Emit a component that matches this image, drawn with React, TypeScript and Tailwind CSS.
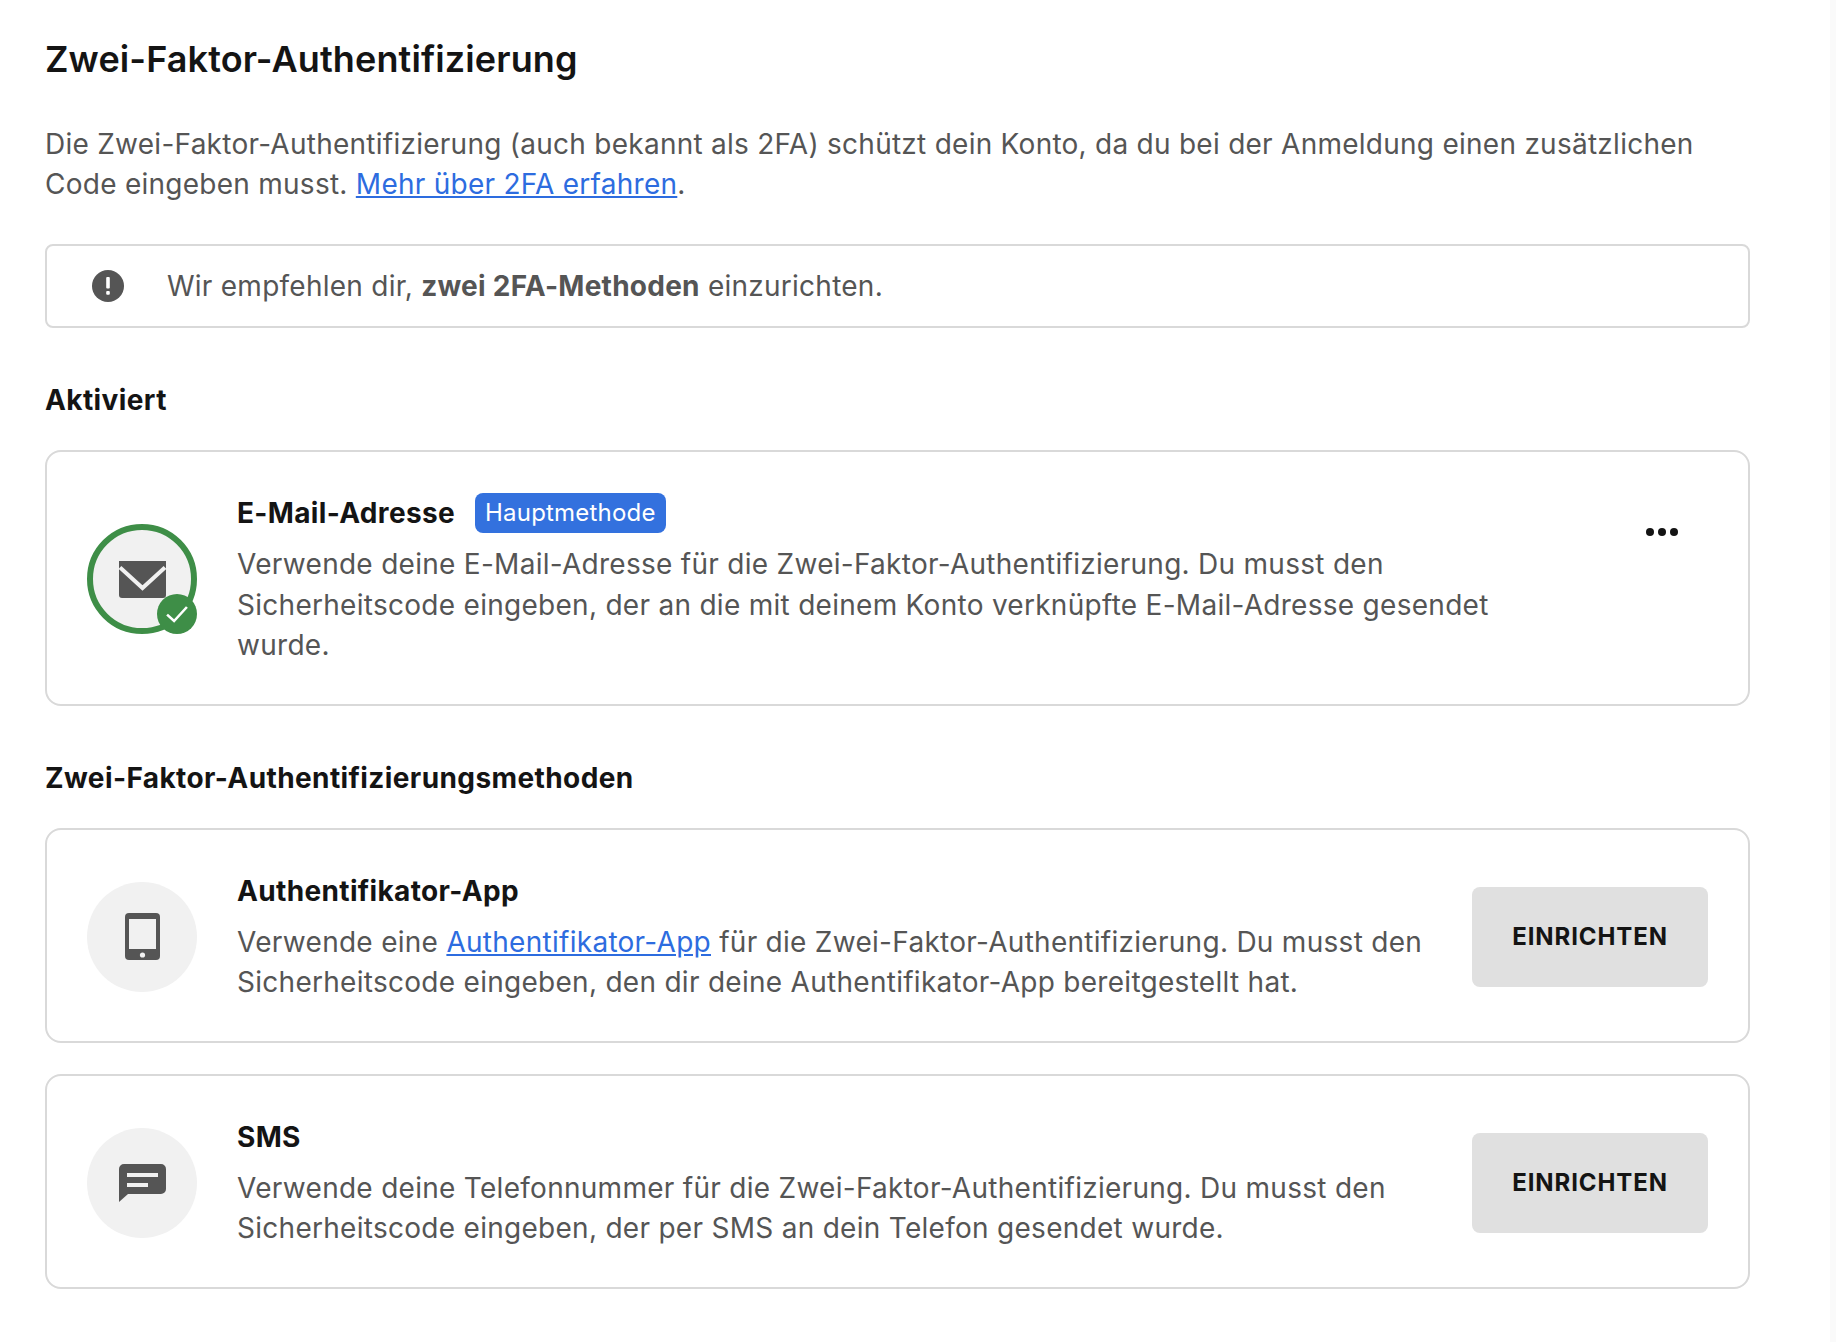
function InfoIcon() {
  return (
    <svg viewBox="0 0 32 32" className="w-8 h-8 shrink-0">
      <circle cx="16" cy="16" r="16" fill="#555555" />
      <rect x="14.2" y="7" width="3.6" height="11.5" rx="1" fill="#ffffff" />
      <rect x="14.2" y="21" width="3.6" height="3.8" rx="1" fill="#ffffff" />
    </svg>
  )
}

function MailIcon() {
  return (
    <svg viewBox="0 0 47 37" className="w-[47px] h-[37px]">
      <path d="M0 0H47V34a3 3 0 0 1-3 3H3a3 3 0 0 1-3-3Z" fill="#555555" />
      <path d="M1 6.5 23.5 27 46 6.5" fill="none" stroke="#f1f1f1" strokeWidth="4" />
    </svg>
  )
}

function TabletIcon() {
  return (
    <svg viewBox="0 0 35 47" className="w-[35px] h-[47px]">
      <rect width="35" height="47" rx="4" fill="#555555" />
      <rect x="4" y="6" width="27" height="30" fill="#f1f1f1" />
      <circle cx="17.5" cy="42" r="2.6" fill="#f1f1f1" />
    </svg>
  )
}

function MessageIcon() {
  return (
    <svg viewBox="0 0 47 38" className="w-[47px] h-[38px]">
      <path d="M5 0H42a5 5 0 0 1 5 5V25a5 5 0 0 1-5 5H9L0 38V5a5 5 0 0 1 5-5Z" fill="#555555" />
      <rect x="8" y="9" width="31" height="4" fill="#f1f1f1" />
      <rect x="8" y="19" width="21" height="4" fill="#f1f1f1" />
    </svg>
  )
}

function Dots() {
  return (
    <div className="flex gap-[4px] shrink-0 self-start mt-[35px] w-[32px] mr-[30px] ml-[106px]">
      <span className="w-2 h-2 rounded-full bg-[#141414]" />
      <span className="w-2 h-2 rounded-full bg-[#141414]" />
      <span className="w-2 h-2 rounded-full bg-[#141414]" />
    </div>
  )
}

function SetupButton() {
  return (
    <button className="w-[236px] h-[100px] shrink-0 ml-[40px] rounded-lg bg-[#e0e0e0] text-[24px] font-bold tracking-[0.9px] text-[#141414]">
      EINRICHTEN
    </button>
  )
}

function MethodCard({ icon, title, badge, action, children }: {
  icon: React.ReactNode
  title: string
  badge?: string
  action: React.ReactNode
  children: React.ReactNode
}) {
  return (
    <div className="flex items-center border-2 border-[#d9d9d9] rounded-2xl px-10 pt-[41px] pb-[38px]">
      {icon}
      <div className="flex-1 min-w-0 ml-10">
        <div className="flex items-start h-[51px]">
          <h3 className="text-[28px] leading-10 font-bold tracking-[0.35px] text-[#141414]">{title}</h3>
          {badge && (
            <span className="ml-5 h-10 px-[10px] rounded-lg bg-[#3371de] text-white text-[24px] leading-10 tracking-[0.2px]">
              {badge}
            </span>
          )}
        </div>
        <p className="text-[28px] leading-[40.5px] tracking-[0.28px] text-[#555555]">{children}</p>
      </div>
      {action}
    </div>
  )
}

function IconCircle({ children, done }: { children: React.ReactNode; done?: boolean }) {
  return (
    <div className={`relative w-[110px] h-[110px] shrink-0 rounded-full bg-[#f1f1f1] flex items-center justify-center ${done ? 'border-[6px] border-[#3e8e47]' : ''}`}>
      {children}
      {done && (
        <div className="absolute right-[-6px] bottom-[-6px] w-10 h-10 rounded-full bg-[#3e8e47] flex items-center justify-center">
          <svg viewBox="0 0 24 24" className="w-7 h-7">
            <path d="M3.5 12.5 9.5 18 20.5 6" fill="none" stroke="#ffffff" strokeWidth="2.2" />
          </svg>
        </div>
      )}
    </div>
  )
}

export default function App() {
  return (
    <div className="flex h-[1342px] bg-white font-['Inter',sans-serif]">
      <main className="flex-1 pl-[45px] pr-[80px] pt-[39px]">
        <h1 className="text-[36px] leading-10 font-semibold tracking-[0.12px] text-[#141414]">Zwei-Faktor-Authentifizierung</h1>
        <p className="mt-[45px] text-[28px] leading-10 tracking-[0.26px] text-[#555555]">
          Die Zwei-Faktor-Authentifizierung (auch bekannt als 2FA) schützt dein Konto, da du bei der Anmeldung einen zusätzlichen Code eingeben musst.{' '}
          <a className="text-[#2d6cdf] underline">Mehr über 2FA erfahren</a>.
        </p>

        <div className="mt-10 h-[84px] flex items-center border-2 border-[#d9d9d9] rounded-lg pl-[45px]">
          <InfoIcon />
          <p className="ml-[43px] text-[28px] leading-10 tracking-[0.25px] text-[#555555]">
            Wir empfehlen dir, <b className="font-bold">zwei 2FA-Methoden</b> einzurichten.
          </p>
        </div>

        <h2 className="mt-[52px] text-[28px] leading-10 font-bold tracking-[0.4px] text-[#141414]">Aktiviert</h2>
        <div className="mt-[30px]">
          <MethodCard
            icon={<IconCircle done><MailIcon /></IconCircle>}
            title="E-Mail-Adresse"
            badge="Hauptmethode"
            action={<Dots />}
          >
            Verwende deine E-Mail-Adresse für die Zwei-Faktor-Authentifizierung. Du musst den Sicherheitscode eingeben, der an die mit deinem Konto verknüpfte E-Mail-Adresse gesendet wurde.
          </MethodCard>
        </div>

        <h2 className="mt-[52px] text-[28px] leading-10 font-bold tracking-[0.4px] text-[#141414]">Zwei-Faktor-Authentifizierungsmethoden</h2>
        <div className="mt-[30px] flex flex-col gap-[31px]">
          <MethodCard
            icon={<IconCircle><TabletIcon /></IconCircle>}
            title="Authentifikator-App"
            action={<SetupButton />}
          >
            Verwende eine <a className="text-[#2d6cdf] underline">Authentifikator-App</a> für die Zwei-Faktor-Authentifizierung. Du musst den Sicherheitscode eingeben, den dir deine Authentifikator-App bereitgestellt hat.
          </MethodCard>
          <MethodCard
            icon={<IconCircle><MessageIcon /></IconCircle>}
            title="SMS"
            action={<SetupButton />}
          >
            Verwende deine Telefonnummer für die Zwei-Faktor-Authentifizierung. Du musst den Sicherheitscode eingeben, der per SMS an dein Telefon gesendet wurde.
          </MethodCard>
        </div>
      </main>
      <aside className="w-[6px] bg-[#fafafa]" />
    </div>
  )
}
